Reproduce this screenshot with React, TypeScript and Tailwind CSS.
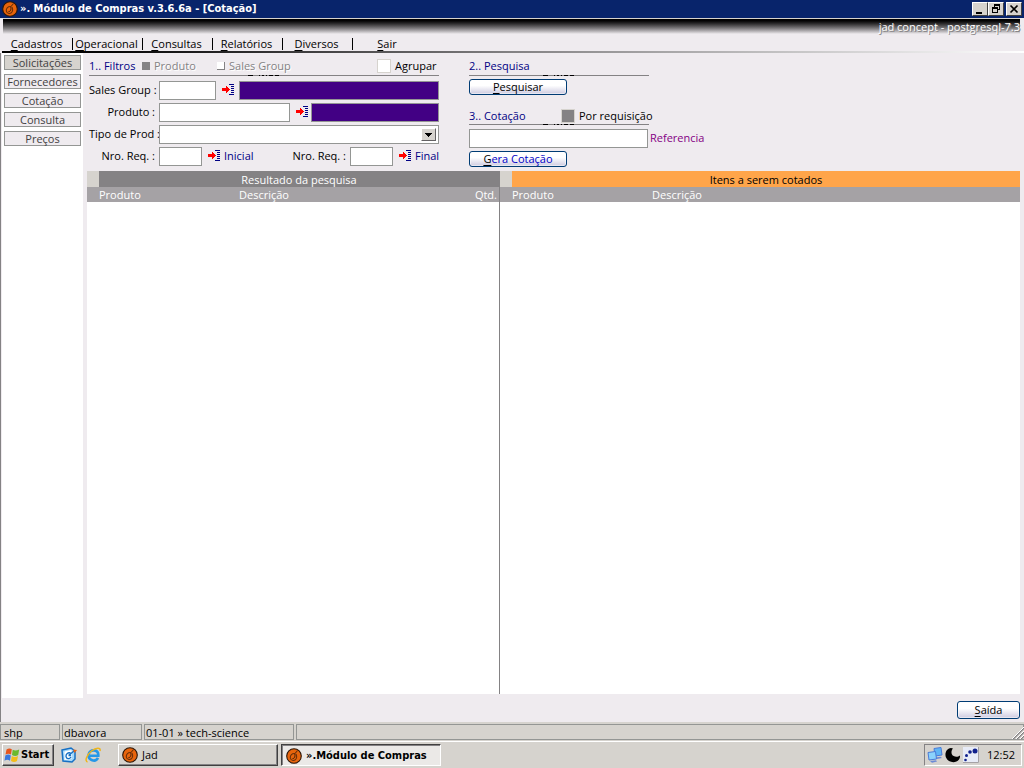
import type { ReactNode } from 'react';

function Logo() {
  return (
    <svg viewBox="0 0 16 16" className="size-4 shrink-0" aria-hidden="true">
      <circle cx="8" cy="8" r="7.3" fill="#e8640c" stroke="#2b1608" strokeWidth="1.1" />
      <path d="M11.500 2.500 9 5.500M9 5.500C6 5 4 7.500 4.300 10c.5 2.500 3.500 3 5 1.800 1.700-1.600 1.500-4 .7-5.800" fill="none" stroke="#6b300a" strokeWidth="1.100" />
      <path d="M8.800 6c.5 2.500 0 4.800-2.300 4.500" fill="none" stroke="#4a2208" />
    </svg>
  );
}

function LookupIcon() {
  return (
    <svg viewBox="0 0 12 12" className="size-3 shrink-0" shapeRendering="crispEdges" aria-hidden="true">
      <path d="M7 0h5v1H7zM9 2h3v1H9zM9 4h3v1H9zM9 6h3v1H9zM9 8h3v1H9zM7 10h5v1H7z" fill="#000084" />
      <path d="M0 4h4V2h1v1h1v1h1v1h1v1H7v1H6v1H5v1H4V7H0z" fill="#f00" />
    </svg>
  );
}

function Lookup({ label, className = 'w-[23px]' }: { label: string; className?: string }) {
  return (
    <button type="button" aria-label={label} className={`flex h-[13px] shrink-0 pl-1.5 ${className}`}>
      <LookupIcon />
    </button>
  );
}

function Hot({ children }: { children: string }) {
  return (
    <>
      <span className="underline underline-offset-2">{children[0]}</span>
      {children.slice(1)}
    </>
  );
}

const field = 'h-[19px] shrink-0 border border-[#949694] bg-white px-1 outline-none';
const fieldLabel = 'w-[70px] shrink-0 pr-1 pb-0.5 text-right whitespace-nowrap';

function PushButton({ children, className = '' }: { children: ReactNode; className?: string }) {
  return (
    <button
      type="button"
      className={`flex items-center justify-center rounded-[3px] border border-[#003c74] bg-linear-to-b from-white from-40% to-[#cecbe0] shadow-[inset_0_0_0_1px_#ffffff80] ${className}`}
    >
      <span>{children}</span>
    </button>
  );
}

function Rule({ offset }: { offset: 'left' | 'right' }) {
  return (
    <div className="relative h-px bg-[#848284]">
      <svg
        viewBox="0 0 32 2"
        className={`absolute -top-px h-0.5 w-8 ${offset === 'left' ? 'left-[159px]' : 'left-[74px]'}`}
        shapeRendering="crispEdges"
        aria-hidden="true"
      >
        <path d="M0 1h5v1H0zM11 1h1v1h-1zM14 1h2v1h-2zM18 1h1v1h-1zM21 1h4v1h-4zM27 1h4v1h-4z" />
      </svg>
    </div>
  );
}

const menus = ['Cadastros', 'Operacional', 'Consultas', 'Relatórios', 'Diversos', 'Sair'];
const sections = ['Solicitações', 'Fornecedores', 'Cotação', 'Consulta', 'Preços'];

const windowButton =
  'flex h-[14px] w-4 items-center justify-center border border-t-white border-l-white border-r-[#404040] border-b-[#404040] bg-[#d6d3ce] text-black';

function TitleBar() {
  return (
    <header className="flex h-[18px] items-center bg-[#08246b] px-0.5 text-white">
      <Logo />
      <h1 className="flex-1 pl-0.5 font-['DejaVu_Sans_Condensed','Noto_Sans',sans-serif] font-bold">
        ». Módulo de Compras v.3.6.6a - [Cotação]
      </h1>
      <button type="button" aria-label="Minimizar" className={windowButton}>
        <svg viewBox="0 0 12 10" className="h-2.5 w-3" shapeRendering="crispEdges"><path d="M2 8h6v2H2z" /></svg>
      </button>
      <button type="button" aria-label="Restaurar" className={windowButton}>
        <svg viewBox="0 0 12 10" className="h-2.5 w-3" shapeRendering="crispEdges">
          <path d="M4 0h6v6H8V5h1V2H5v1H4zM2 3h6v6H2zM3 5v3h4V5z" fillRule="evenodd" />
        </svg>
      </button>
      <button type="button" aria-label="Fechar" className={`ml-0.5 ${windowButton}`}>
        <svg viewBox="0 0 12 10" className="h-2.5 w-3"><path d="m2.5 1.5 7 7m0-7-7 7" stroke="#000" strokeWidth="1.7" /></svg>
      </button>
    </header>
  );
}

function Filters() {
  return (
    <form className="w-[350px] shrink-0">
      <div className="flex h-5 items-center pt-0.5">
        <h2 className="w-[53px] text-[#000084]">1.. Filtros</h2>
        <label className="flex w-[75px] items-center gap-1 text-[#848284] [text-shadow:1px_1px_#fff]">
          <input type="checkbox" disabled className="size-2 appearance-none bg-[#848284]" />
          Produto
        </label>
        <label className="flex w-40 items-center gap-1 text-[#848284] [text-shadow:1px_1px_#fff]">
          <input type="checkbox" disabled className="size-2 appearance-none border-r border-b border-[#848284] bg-white" />
          Sales Group
        </label>
        <label className="flex items-center gap-1">
          <input type="checkbox" className="size-3.5 appearance-none border border-[#d6d3ce] bg-white" />
          Agrupar
        </label>
      </div>
      <Rule offset="left" />
      <div className="mt-[5px] flex flex-col gap-[3px]">
        <div className="flex items-center">
          <label htmlFor="group" className={fieldLabel}>Sales Group :</label>
          <input id="group" className={`w-[57px] ${field}`} />
          <Lookup label="Buscar grupo" />
          <input aria-label="Nome do grupo" readOnly className="h-[19px] w-0 flex-1 border border-[#949694] bg-[#420084]" />
        </div>
        <div className="flex items-center">
          <label htmlFor="product" className={fieldLabel}>Produto :</label>
          <input id="product" className={`w-[131px] ${field}`} />
          <Lookup label="Buscar produto" className="w-[21px]" />
          <input aria-label="Nome do produto" readOnly className="h-[19px] w-0 flex-1 border border-[#949694] bg-[#420084]" />
        </div>
        <div className="flex items-center">
          <label htmlFor="kind" className={fieldLabel}>Tipo de Prod :</label>
          <div className="relative flex flex-1">
            <select id="kind" className={`w-full appearance-none ${field}`}><option value=""></option></select>
            <span className="pointer-events-none absolute top-[3px] right-[3px] flex h-[13px] w-[15px] items-center justify-center border border-t-white border-l-white border-r-[#636163] border-b-[#636163] bg-[#d6d3ce]">
              <svg viewBox="0 0 7 4" className="h-1 w-[7px]" shapeRendering="crispEdges"><path d="M0 0h7v1H6v1H5v1H4v1H3V3H2V2H1V1H0z" /></svg>
            </span>
          </div>
        </div>
        <div className="flex items-center">
          <label htmlFor="first" className={fieldLabel}>Nro. Req. :</label>
          <input id="first" className={`w-[43px] ${field}`} />
          <Lookup label="Buscar inicial" className="w-[22px]" />
          <span className="w-14 shrink-0 pb-0.5 text-[#000084]">Inicial</span>
          <label htmlFor="last" className={fieldLabel}>Nro. Req. :</label>
          <input id="last" className={`w-[43px] ${field}`} />
          <Lookup label="Buscar final" className="w-[22px]" />
          <span className="pb-0.5 text-[#000084]">Final</span>
        </div>
      </div>
    </form>
  );
}

function Actions() {
  return (
    <section className="w-[280px] shrink-0">
      <div className="w-[180px]">
        <h2 className="flex h-5 items-center pt-0.5 text-[#000084]">2.. Pesquisa</h2>
        <Rule offset="right" />
        <PushButton className="mt-[3px] h-4 w-[98px]"><Hot>Pesquisar</Hot></PushButton>
        <div className="mt-3 flex h-[17px] items-center">
          <h2 className="w-[92px] shrink-0 text-[#000084]">3.. Cotação</h2>
          <label className="flex items-center gap-1 whitespace-nowrap">
            <input type="checkbox" className="size-3.5 shrink-0 appearance-none border border-[#d6d3ce] bg-[#848284]" />
            Por requisição
          </label>
        </div>
        <Rule offset="right" />
      </div>
      <div className="mt-1 flex items-center gap-0.5">
        <input id="reference" className={`w-[179px] ${field}`} />
        <label htmlFor="reference" className="pb-0.5 text-[#840084]">Referencia</label>
      </div>
      <PushButton className="mt-[3px] h-4 w-[98px] text-[#0000c6]">
        <span className="text-black underline underline-offset-2">G</span>era Cotação
      </PushButton>
    </section>
  );
}

function Grid({ title, quantity = false }: { title: string; quantity?: boolean }) {
  return (
    <table className="w-full table-fixed border-collapse text-left text-white">
      <colgroup>
        <col className="w-3" />
        <col className="w-[140px]" />
        <col />
        {quantity && <col className="w-10" />}
      </colgroup>
      <thead>
        <tr className={`h-4 ${quantity ? 'bg-[#848284]' : 'bg-[#ffa54a] text-black'}`}>
          <td className="bg-[#d6d3ce] p-0"></td>
          <th colSpan={quantity ? 3 : 2} className="p-0 pt-0.5 text-center font-normal">{title}</th>
        </tr>
        <tr className="h-[15px] bg-[#a5a2a5]">
          <td className="p-0"></td>
          <th className="p-0 font-normal">Produto</th>
          <th className="p-0 font-normal">Descrição</th>
          {quantity && <th className="p-0 pr-0.5 text-right font-normal">Qtd.</th>}
        </tr>
      </thead>
      <tbody></tbody>
    </table>
  );
}

function StatusBar() {
  const cell = 'h-4 overflow-hidden border border-[#949694] leading-4';
  return (
    <div className="relative flex gap-0.5 border-b border-white bg-[#d6d3ce] pt-0.5 pb-px">
      <div className={`w-[60px] pl-[3px] ${cell}`}>shp</div>
      <div className={`w-20 pl-px ${cell}`}>dbavora</div>
      <div className={`w-[150px] pl-px ${cell}`}>01-01 » tech-science</div>
      <div className={`flex-1 ${cell}`}></div>
      <svg viewBox="0 0 12 12" className="absolute right-0 bottom-0.5 size-3" aria-hidden="true">
        <path d="M0 12 12 0v12z" fill="#d6d3ce" />
        <path d="M1 12 12 1M5 12l7-7M9 12l3-3" stroke="#848284" strokeWidth="1.5" />
        <path d="M0 12 12 0M4 12l8-8M8 12l4-4" stroke="#fff" />
      </svg>
    </div>
  );
}

function Taskbar() {
  const raised = 'border border-t-white border-l-white border-r-[#404040] border-b-[#404040] shadow-[inset_-1px_-1px_#848284]';
  return (
    <footer className="flex h-[26px] items-center bg-[#d6d3ce] px-0.5">
      <button type="button" className={`flex h-[22px] w-[52px] items-center gap-px pl-px font-['DejaVu_Sans_Condensed','Noto_Sans',sans-serif] font-bold ${raised}`}>
        <svg viewBox="0 0 16 16" className="size-4 shrink-0" aria-hidden="true">
          <path d="M2.500 2.500c2-1.500 4-1.200 5.300-.2L7 7.500C5.200 6.300 3.300 6.500 1.500 7.600z" fill="#e8561c" />
          <path d="M8.700 2.700c2 1.200 4 1 6.500-.3l-1 5.600c-2 1.200-4 1.200-6.200 0z" fill="#6cb92d" />
          <path d="M1.300 8.500c2-1.200 4-1.200 5.500 0L6 13.700c-1.800-1.200-3.700-1.200-5.500 0z" fill="#3a78dc" />
          <path d="M7.800 9c2 1.200 4 1.200 6.200 0l-1 5c-2 1.300-4 1.300-6 0z" fill="#f4bd19" />
        </svg>
        Start
      </button>
      <button type="button" aria-label="Mostrar área de trabalho" className="ml-[7px] flex">
        <svg viewBox="0 0 16 16" className="size-4" aria-hidden="true">
          <path d="m1 3 9-2 4 3v8l-3 3-9-1z" fill="#a5d8fa" stroke="#1670c4" strokeWidth="1.500" />
          <path d="m3.500 4.500 7-1.500v9l-7 1z" fill="#fff" />
          <path d="M9.500 6C7 5 4.800 7 5 9.500c.3 2.500 3.500 3 5 .5M7.500 8.500 13 4M7.500 8.500H10" fill="none" stroke="#1670c4" strokeWidth="1.400" />
          <path d="m12 2.500 4 .5-2.500 3z" fill="#e86818" />
        </svg>
      </button>
      <button type="button" aria-label="Internet Explorer" className="ml-2 flex">
        <svg viewBox="0 0 16 16" className="size-4" aria-hidden="true">
          <path d="M13 10.800C11.800 13 9.500 14 7.300 13.200 4.500 12.200 3.300 10 3.600 7.800 4 4.800 6.500 3.200 9 3.400c3.200.3 4.500 2.700 4.300 5.400H5" fill="none" stroke="#2597e8" strokeWidth="2.600" />
          <path d="M2.500 15C-.5 14 1.500 8 6.500 4 11 .5 16 0 15 4" fill="none" stroke="#efb51b" strokeWidth="1.500" />
        </svg>
      </button>
      <button type="button" className={`ml-[17px] flex h-[22px] w-40 items-center gap-1 pl-[3px] ${raised}`}>
        <Logo />
        Jad
      </button>
      <button
        type="button"
        className="ml-[3px] flex h-[22px] w-40 items-center gap-1 border border-t-[#404040] border-l-[#404040] border-r-white border-b-white bg-[#ebe9e7] pt-0.5 pl-1 font-['DejaVu_Sans_Condensed','Noto_Sans',sans-serif] font-bold whitespace-nowrap shadow-[inset_1px_1px_#848284]"
      >
        <Logo />
        ».Módulo de Compras
      </button>
      <div className="ml-auto flex h-[22px] w-[98px] items-center gap-0.5 border border-t-[#848284] border-l-[#848284] border-r-white border-b-white pl-0.5">
        <svg viewBox="0 0 16 16" className="size-4" aria-hidden="true">
          <path d="m7 1.500 7-1 1 7.500-7 1z" fill="#5fb5f5" stroke="#4a7bd8" />
          <path d="m8.500 10.500 5-.8 1.500 1.300-5 1z" fill="#6b8ad6" />
          <path d="m1 5.500 7.500-1 1 7.500-7.500 1z" fill="#8bd3fc" stroke="#4a7bd8" />
          <path d="m3 14 6-.8 1 1.300-5 1.300z" fill="#6b8ad6" />
        </svg>
        <svg viewBox="0 0 16 16" className="size-4" aria-hidden="true">
          <path d="M6 1C1 1.500-.5 7 1 10.500c2 5 9.500 6.500 13 2 .8-1.200 1.200-2.500 1-4C12 11 8 9.500 7 7.500 6 5.500 6.500 3 8 1.500z" />
        </svg>
        <svg viewBox="0 0 16 16" className="size-4" aria-hidden="true">
          <path d="M0 0h16v16H0z" fill="#e7ebf7" />
          <path d="M15.500 0v15.500H0" fill="none" stroke="#a5a2a5" />
          <g fill="#10208c"><circle cx="12" cy="4" r="2.500" /><circle cx="7" cy="5" r="1.800" /><circle cx="3.500" cy="8.500" r="1.500" /><circle cx="2.500" cy="13" r="1.300" /></g>
        </svg>
        <time className="flex-1 text-center">12:52</time>
      </div>
    </footer>
  );
}

export default function App() {
  return (
    <div className="flex min-h-screen flex-col bg-[#efebef] font-['Open_Sans','Noto_Sans',sans-serif] text-[11px] leading-[14px] text-black">
      <TitleBar />
      <div className="mr-1 ml-[3px] flex h-4 items-center justify-end border-t border-[#d6d3ce] bg-linear-to-b from-black to-[#efebef] text-white [text-shadow:1px_1px_#848284]">
        jad concept - postgresql-7.3
      </div>
      <nav className="ml-[3px] flex h-[17px] items-end pb-px">
        {menus.map((name) => (
          <a key={name} href="#" className="w-[70px] border-r border-black pr-0.5 text-center leading-3 last:border-r-0">
            <Hot>{name}</Hot>
          </a>
        ))}
      </nav>
      <div className="ml-0.5 h-0.5 bg-linear-to-r from-black via-[#848284] via-50% to-white"></div>
      <div className="flex flex-1 border-l border-[#848284] pl-px">
        <aside className="mb-6 flex w-[81px] shrink-0 flex-col gap-1 bg-white px-0.5 pt-0.5">
          {sections.map((name, i) => (
            <button
              key={name}
              type="button"
              className={`flex h-[15px] items-center justify-center border border-[#949694] text-[#424142] ${i === 0 ? 'bg-[#d6d3ce]' : 'bg-[#efebef]'}`}
            >
              {name}
            </button>
          ))}
        </aside>
        <main className="flex flex-1 flex-col px-1">
          <div className="flex gap-[30px] pt-0.5 pl-0.5">
            <Filters />
            <Actions />
          </div>
          <div className="mt-1 flex flex-1 bg-white">
            <section className="w-[413px] shrink-0 border-r border-[#848284]"><Grid title="Resultado da pesquisa" quantity /></section>
            <section className="flex-1"><Grid title="Itens a serem cotados" /></section>
          </div>
          <div className="flex h-7 items-center justify-end pt-1">
            <PushButton className="h-[18px] w-[63px]"><Hot>Saída</Hot></PushButton>
          </div>
        </main>
      </div>
      <StatusBar />
      <Taskbar />
    </div>
  );
}
